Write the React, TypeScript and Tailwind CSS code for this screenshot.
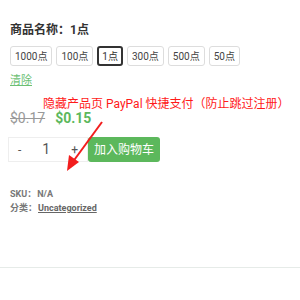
export default function App() {
  const options = ["1000点", "100点", "1点", "300点", "500点", "50点"];
  const selected = "1点";

  return (
    <div className="relative w-[300px] h-[300px] overflow-hidden bg-white text-[#333] font-['Roboto','Noto_Sans_CJK_SC',sans-serif]">
      <div className="px-[10px] pt-[21px]">
        <div className="text-[12px] font-bold leading-[18px] text-[#333]">商品名称：1点</div>

        <div className="mt-[7px] flex gap-[4px]">
          {options.map((o) => (
            <div
              key={o}
              className={
                o === selected
                  ? "h-[20px] px-[3px] flex items-center rounded-[3px] border-2 border-[#333] text-[10px] text-[#333]"
                  : "h-[20px] px-[4px] flex items-center rounded-[3px] border border-[#ddd] text-[10px] text-[#444]"
              }
            >
              {o}
            </div>
          ))}
        </div>

        <div className="mt-[8px] text-[11px] leading-[14px] text-[#6cbf73] underline">清除</div>

        <div className="mt-[20px] flex items-center gap-[10px] leading-[20px]">
          <span className="text-[14px] text-[#999] line-through">$0.17</span>
          <span className="text-[14px] font-bold text-[#5cb85c]">$0.15</span>
        </div>

        <div className="mt-[9px] flex items-center ml-[-2px]">
          <div className="w-[80px] h-[25px] flex items-center justify-between px-[9px] border border-[#eee] text-[#555]">
            <span className="text-[12px]">-</span>
            <span className="text-[14px]">1</span>
            <span className="text-[12px]">+</span>
          </div>
          <div className="w-[72px] h-[25px] flex items-center justify-center rounded-[3px] bg-[#5cb85c] text-white text-[12px]">
            加入购物车
          </div>
        </div>

        <div className="mt-[26px] text-[9px] leading-[13px] text-[#777] font-bold">
          <div>
            SKU：<span className="ml-[1px]">N/A</span>
          </div>
          <div className="mt-[1px]">
            分类：<span className="ml-[1px] underline text-[#666]">Uncategorized</span>
          </div>
        </div>
      </div>

      <div className="mt-[52px] border-t border-[#e6ebe8]" />

      <div className="absolute left-[43px] top-[96px] text-[12px] leading-[16px] text-[#ff1a1a] whitespace-nowrap">
        隐藏产品页 PayPal 快捷支付（防止跳过注册）
      </div>

      <svg className="absolute left-0 top-0" width="300" height="300" viewBox="0 0 300 300">
        <line x1="102" y1="122" x2="72" y2="163" stroke="#f21d1d" strokeWidth="2" />
        <polygon points="67,171 69,155 79,162" fill="#f21d1d" />
      </svg>
    </div>
  );
}
